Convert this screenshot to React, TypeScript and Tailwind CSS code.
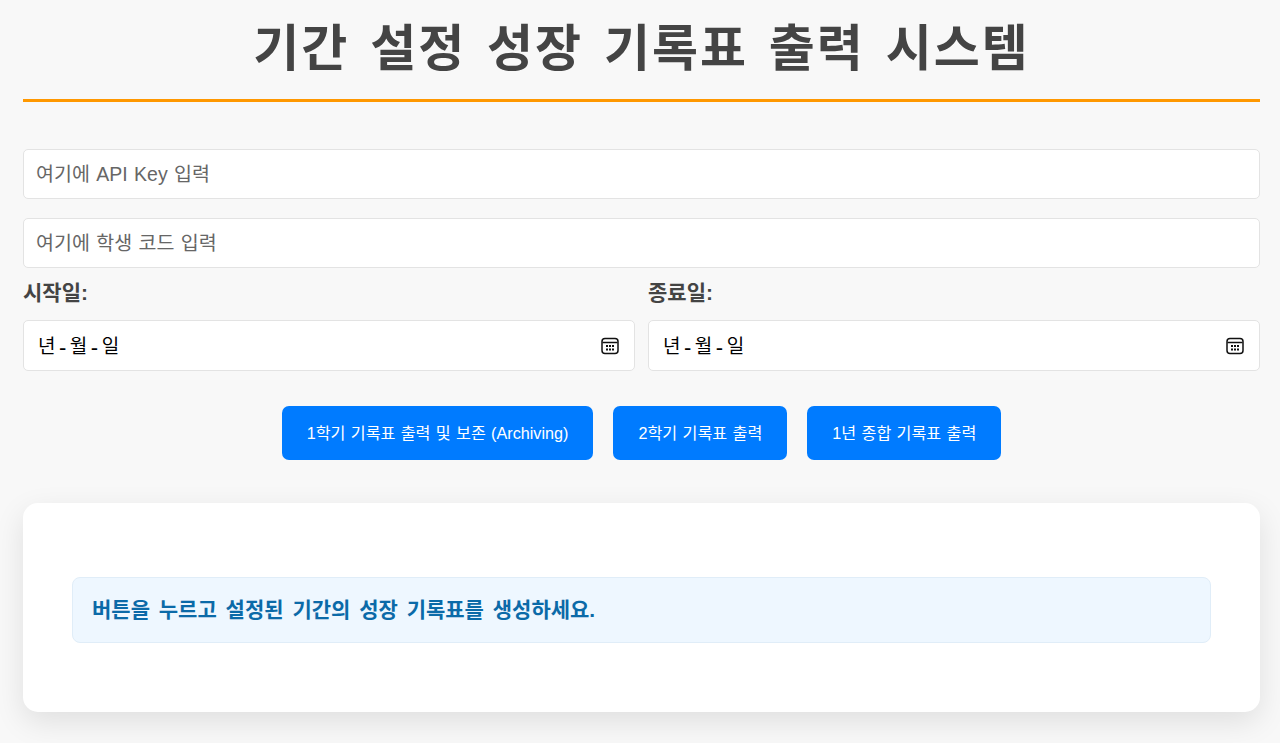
const fontStack = "font-['Liberation_Sans','Noto_Sans_CJK_KR',sans-serif]";

function CalendarIcon() {
  return (
    <svg width="20" height="20" viewBox="0 0 20 20" fill="none" aria-hidden="true">
      <rect x="2" y="2.5" width="16" height="15" rx="3" stroke="#111" strokeWidth="1.5" />
      <path d="M2.5 6.5h15" stroke="#111" strokeWidth="1.5" />
      <path d="M6 10h2M9 10h2M12 10h2M6 13.5h2M9 13.5h2M12 13.5h2" stroke="#111" strokeWidth="1.8" />
    </svg>
  );
}

function DateField({ label }: { label: string }) {
  return (
    <div className="flex-1">
      <div className="h-[41px] text-[21px] leading-[28px] font-bold text-[#444]">{label}</div>
      <div className="flex h-[51px] items-center justify-between rounded-[5px] border border-[#e3e3e3] bg-white px-[14px]">
        <span className="flex items-center pt-[4px] text-[19px] text-black">
          <span>년</span>
          <span className="mx-[3.5px] text-[22px] leading-none">-</span>
          <span>월</span>
          <span className="mx-[3.5px] text-[22px] leading-none">-</span>
          <span>일</span>
        </span>
        <CalendarIcon />
      </div>
    </div>
  );
}

function TextField({ placeholder }: { placeholder: string }) {
  return (
    <input
      placeholder={placeholder}
      className="block h-[50px] w-full rounded-[5px] border border-[#e3e3e3] bg-white px-[12px] text-[19.5px] [word-spacing:1px] text-[#444] outline-none placeholder:text-[#666]"
    />
  );
}

function ActionButton({ children }: { children: string }) {
  return (
    <button className="h-[54px] rounded-[7px] bg-[#007bff] px-[25px] text-[16.2px] [word-spacing:0.8px] text-white">
      {children}
    </button>
  );
}

export default function App() {
  return (
    <div className={`min-h-[743px] bg-[#f8f8f8] pt-0 pr-[20px] pb-[31px] pl-[23px] ${fontStack}`}>
      <h1 className="border-b-[3px] border-[#ff9800] pt-[15px] pb-[15px] text-center text-[50px] leading-[69px] font-bold tracking-[2px] [word-spacing:5px] text-[#444]">
        기간 설정 성장 기록표 출력 시스템
      </h1>

      <div className="mt-[47px] flex flex-col gap-[19px]">
        <TextField placeholder="여기에 API Key 입력" />
        <TextField placeholder="여기에 학생 코드 입력" />
      </div>

      <div className="mt-[11px] flex gap-[13px]">
        <DateField label="시작일:" />
        <DateField label="종료일:" />
      </div>

      <div className="mt-[35px] flex justify-center gap-[20px]">
        <ActionButton>1학기 기록표 출력 및 보존 (Archiving)</ActionButton>
        <ActionButton>2학기 기록표 출력</ActionButton>
        <ActionButton>1년 종합 기록표 출력</ActionButton>
      </div>

      <div className="mt-[43px] rounded-[15px] bg-white px-[49px] pt-[74px] pb-[69px] shadow-[0_10px_30px_rgba(0,0,0,0.1)]">
        <div className="rounded-[8px] border border-[#e0edf8] bg-[#eef7ff] px-[19px] py-[18px] text-[21px] leading-[28px] font-bold [word-spacing:3px] text-[#0b6aa8]">
          버튼을 누르고 설정된 기간의 성장 기록표를 생성하세요.
        </div>
      </div>
    </div>
  );
}
